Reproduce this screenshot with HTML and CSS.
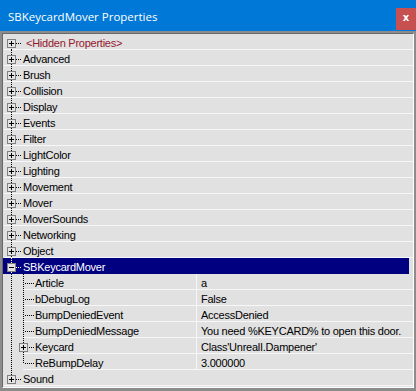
FILE: index.html
```html
<!DOCTYPE html>
<html>
<head>
<meta charset="utf-8">
<link rel="stylesheet" href="styles.css">
</head>
<body>
<div class="window">
  <div class="titlebar">
    <span class="title">SBKeycardMover Properties</span>
    <span class="close">x</span>
  </div>
  <div class="frame">
    <div class="list">
      <div class="row cat first"><span class="g0"><span class="box plus"></span></span><span class="name hidden">&lt;Hidden Properties&gt;</span></div>
      <div class="row cat"><span class="g0"><span class="box plus"></span></span><span class="name">Advanced</span></div>
      <div class="row cat"><span class="g0"><span class="box plus"></span></span><span class="name">Brush</span></div>
      <div class="row cat"><span class="g0"><span class="box plus"></span></span><span class="name">Collision</span></div>
      <div class="row cat"><span class="g0"><span class="box plus"></span></span><span class="name">Display</span></div>
      <div class="row cat"><span class="g0"><span class="box plus"></span></span><span class="name">Events</span></div>
      <div class="row cat"><span class="g0"><span class="box plus"></span></span><span class="name">Filter</span></div>
      <div class="row cat"><span class="g0"><span class="box plus"></span></span><span class="name">LightColor</span></div>
      <div class="row cat"><span class="g0"><span class="box plus"></span></span><span class="name">Lighting</span></div>
      <div class="row cat"><span class="g0"><span class="box plus"></span></span><span class="name">Movement</span></div>
      <div class="row cat"><span class="g0"><span class="box plus"></span></span><span class="name">Mover</span></div>
      <div class="row cat"><span class="g0"><span class="box plus"></span></span><span class="name">MoverSounds</span></div>
      <div class="row cat"><span class="g0"><span class="box plus"></span></span><span class="name">Networking</span></div>
      <div class="row cat"><span class="g0"><span class="box plus"></span></span><span class="name">Object</span></div>
      <div class="row cat sel"><span class="g0"><span class="box minus"></span></span><span class="name">SBKeycardMover</span></div>
      <div class="row prop"><span class="g0"></span><span class="cell"><span class="g1"></span><span class="name">Article</span><span class="val">a</span></span></div>
      <div class="row prop"><span class="g0"></span><span class="cell"><span class="g1"></span><span class="name">bDebugLog</span><span class="val">False</span></span></div>
      <div class="row prop"><span class="g0"></span><span class="cell"><span class="g1"></span><span class="name">BumpDeniedEvent</span><span class="val">AccessDenied</span></span></div>
      <div class="row prop"><span class="g0"></span><span class="cell"><span class="g1"></span><span class="name">BumpDeniedMessage</span><span class="val">You need %KEYCARD% to open this door.</span></span></div>
      <div class="row prop"><span class="g0"></span><span class="cell"><span class="g1 hasbox"><span class="box plus"></span></span><span class="name">Keycard</span><span class="val">Class'UnrealI.Dampener'</span></span></div>
      <div class="row prop lastchild"><span class="g0"></span><span class="cell"><span class="g1"></span><span class="name">ReBumpDelay</span><span class="val">3.000000</span></span></div>
      <div class="row cat last"><span class="g0"><span class="box plus"></span></span><span class="name">Sound</span></div>
    </div>
  </div>
</div>
</body>
</html>
```
FILE: styles.css
```css
html, body {
  margin: 0;
  padding: 0;
  background: #e1e1e1;
}

.window {
  width: 416px;
  height: 391px;
  display: flex;
  flex-direction: column;
  font-family: "Liberation Sans", Arial, sans-serif;
  font-size: 11px;
  color: #000;
}

.titlebar {
  height: 31px;
  flex: none;
  background: #0078d7;
  display: flex;
  align-items: flex-start;
  justify-content: space-between;
}

.title {
  font-family: "Open Sans", "Noto Sans", sans-serif;
  font-size: 11.5px;
  color: #fff;
  padding: 8px 0 0 8px;
  line-height: 17px;
}

.close {
  width: 20px;
  height: 22px;
  margin-top: 8px;
  background: #c75050;
  color: #fff;
  font-family: "DejaVu Sans", sans-serif;
  font-weight: bold;
  font-size: 10px;
  line-height: 20px;
  text-align: center;
}

.frame {
  flex: 1;
  border-style: solid;
  border-color: #8c8c8c;
  border-width: 2px 2px 3px 2px;
  display: flex;
}

.list {
  flex: 1;
  border-style: solid;
  border-width: 1px;
  border-color: #696969 #ffffff #ffffff #696969;
  background: #e1e1e1;
  display: flex;
  flex-direction: column;
  letter-spacing: -0.25px;
}

.row {
  height: 16px;
  flex: none;
  display: flex;
  line-height: 15px;
  white-space: nowrap;
}

.name, .val {
  padding-top: 2px;
  box-sizing: border-box;
  height: 15px;
}

.row.cat {
  background: linear-gradient(#f7f7f7, #f7f7f7) 1px 100% / 100% 1px no-repeat;
}

.row.sel {
  background:
    linear-gradient(#000080, #000080) 0 0 / calc(100% - 4px) 16px no-repeat;
  color: #fff;
}

.g0 {
  width: 20px;
  flex: none;
  display: flex;
  background:
    repeating-linear-gradient(90deg, #000 0 1px, transparent 1px 2px) 13px 9px / 6px 1px no-repeat,
    repeating-linear-gradient(#000 0 1px, transparent 1px 2px) 8px 0 / 1px 100% no-repeat;
}

.row.first .g0 {
  background:
    repeating-linear-gradient(90deg, #000 0 1px, transparent 1px 2px) 13px 9px / 6px 1px no-repeat,
    repeating-linear-gradient(#000 0 1px, transparent 1px 2px) 8px 9px / 1px 7px no-repeat;
}

.row.last .g0 {
  background:
    repeating-linear-gradient(90deg, #000 0 1px, transparent 1px 2px) 13px 9px / 6px 1px no-repeat,
    repeating-linear-gradient(#000 0 1px, transparent 1px 2px) 8px 0 / 1px 9px no-repeat;
}

.row.sel .g0 {
  background:
    repeating-linear-gradient(90deg, #fff 0 1px, transparent 1px 2px) 13px 9px / 6px 1px no-repeat,
    repeating-linear-gradient(#fff 0 1px, transparent 1px 2px) 8px 0 / 1px 100% no-repeat;
}

.row.prop .g0 {
  width: 14px;
  background: repeating-linear-gradient(#000 0 1px, transparent 1px 2px) 8px 0 / 1px 100% no-repeat;
}

.box {
  width: 7px;
  height: 7px;
  margin: 5px 0 0 4px;
  border: 1px solid #808080;
  background:
    linear-gradient(#000, #000) 1px 3px / 5px 1px no-repeat,
    linear-gradient(#000, #000) 3px 1px / 1px 5px no-repeat,
    #e4e4e4;
}

.box.minus {
  background:
    linear-gradient(#000, #000) 1px 3px / 5px 1px no-repeat,
    #e4e4e4;
}

.row.cat .name.hidden {
  padding-left: 3px;
  color: #96172e;
}

.cell {
  flex: 1;
  display: flex;
  background: linear-gradient(#f7f7f7, #f7f7f7) 6px 100% / 100% 1px no-repeat;
}

.g1 {
  width: 18px;
  flex: none;
  display: flex;
  background:
    repeating-linear-gradient(90deg, #000 0 1px, transparent 1px 2px) 8px 9px / 9px 1px no-repeat,
    repeating-linear-gradient(#000 0 1px, transparent 1px 2px) 6px 0 / 1px 100% no-repeat;
}

.row.lastchild .g1 {
  background:
    repeating-linear-gradient(90deg, #000 0 1px, transparent 1px 2px) 8px 9px / 9px 1px no-repeat,
    repeating-linear-gradient(#000 0 1px, transparent 1px 2px) 6px 0 / 1px 10px no-repeat;
}

.g1.hasbox {
  background:
    repeating-linear-gradient(90deg, #000 0 1px, transparent 1px 2px) 12px 9px / 5px 1px no-repeat,
    repeating-linear-gradient(#000 0 1px, transparent 1px 2px) 6px 0 / 1px 100% no-repeat;
}

.g1 .box {
  margin-left: 2px;
}

.row.prop .name {
  width: 161px;
  flex: none;
}

.val {
  flex: 1;
  border-left: 1px solid #f7f7f7;
  padding-left: 4px;
}
```
